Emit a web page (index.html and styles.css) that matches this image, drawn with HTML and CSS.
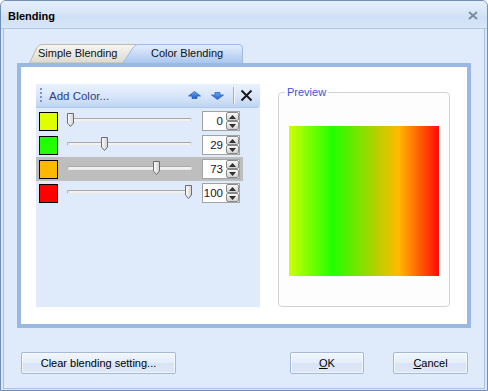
FILE: index.html
```html
<!DOCTYPE html>
<html>
<head>
<meta charset="utf-8">
<link rel="stylesheet" href="styles.css">
</head>
<body>
<div class="win">
  <div class="titlebar">
    <span class="title">Blending</span>
    <svg class="close" width="10" height="9" viewBox="0 0 10 9"><path d="M1,1 L9,8 M9,1 L1,8" stroke="#7b8ba6" stroke-width="2"/></svg>
  </div>
  <div class="client">
    <div class="tabs">
      <div class="tab tab-off">
        <svg class="tabshape" width="109" height="19" viewBox="0 0 109 19">
          <defs><linearGradient id="g1" x1="0" y1="0" x2="0" y2="1"><stop offset="0" stop-color="#f7f6f2"/><stop offset="1" stop-color="#dcd9cf"/></linearGradient></defs>
          <path d="M1.5,19 L9,3.5 Q10.5,0.5 14,0.5 L108,0.5 L108,19 Z" fill="url(#g1)" stroke="#bdbab0"/>
        </svg>
        <span class="tablabel">Simple Blending</span>
      </div>
      <div class="tab tab-on">
        <svg class="tabshape" width="121" height="19" viewBox="0 0 121 19">
          <defs><linearGradient id="g2" x1="0" y1="0" x2="0" y2="1"><stop offset="0" stop-color="#e5effd"/><stop offset="1" stop-color="#a8c5ee"/></linearGradient></defs>
          <path d="M0.5,19.5 L11.5,3 Q13.5,0.5 17,0.5 L117,0.5 Q120.5,0.5 120.5,4 L120.5,19.5" fill="url(#g2)" stroke="#9cbbe6"/>
        </svg>
        <span class="tablabel">Color Blending</span>
      </div>
    </div>
    <div class="page">
      <div class="listpanel">
        <div class="toolbar">
          <span class="grip"></span>
          <span class="addcolor">Add Color...</span>
          <svg class="tbicon up" width="13" height="8" viewBox="0 0 13 8">
            <defs><linearGradient id="ga" x1="0" y1="0" x2="0" y2="1"><stop offset="0" stop-color="#6aa8f0"/><stop offset="1" stop-color="#1c5fcf"/></linearGradient></defs>
            <path d="M6.5,0.5 L12.5,5 L9,5 L9,7.5 L4,7.5 L4,5 L0.5,5 Z" fill="url(#ga)" stroke="#2a62c0" stroke-width="0.8"/>
          </svg>
          <svg class="tbicon down" width="13" height="8" viewBox="0 0 13 8">
            <defs><linearGradient id="gb" x1="0" y1="0" x2="0" y2="1"><stop offset="0" stop-color="#6aa8f0"/><stop offset="1" stop-color="#1c5fcf"/></linearGradient></defs>
            <path d="M4,0.5 L9,0.5 L9,3 L12.5,3 L6.5,7.5 L0.5,3 L4,3 Z" fill="url(#gb)" stroke="#2a62c0" stroke-width="0.8"/>
          </svg>
          <span class="tbsep"></span>
          <svg class="tbicon del" width="13" height="13" viewBox="0 0 13 13"><path d="M1.5,1.5 L11.5,11.5 M11.5,1.5 L1.5,11.5" stroke="#1a1a1a" stroke-width="2"/></svg>
        </div>

        <div class="row">
          <span class="swatch" style="background:#ddff00"></span>
          <div class="slider"><div class="track"></div><svg class="thumb" style="left:0px" width="7" height="14" viewBox="0 0 7 14"><defs><linearGradient id="gt" x1="0" y1="0" x2="1" y2="0"><stop offset="0" stop-color="#ffffff"/><stop offset="1" stop-color="#d0d0d0"/></linearGradient></defs><path d="M0.5,0.5 H6.5 V10 L3.5,13.5 L0.5,10 Z" fill="url(#gt)" stroke="#6e6e6e"/></svg></div>
          <div class="spin"><span class="num">0</span><span class="spinbtns"><span class="sb"><svg width="7" height="4" viewBox="0 0 7 4"><path d="M0,4 L3.5,0 L7,4 Z" fill="#303030"/></svg></span><span class="sb"><svg width="7" height="4" viewBox="0 0 7 4"><path d="M0,0 L3.5,4 L7,0 Z" fill="#303030"/></svg></span></span></div>
        </div>
        <div class="row">
          <span class="swatch" style="background:#22ff00"></span>
          <div class="slider"><div class="track"></div><svg class="thumb" style="left:34px" width="7" height="14" viewBox="0 0 7 14"><path d="M0.5,0.5 H6.5 V10 L3.5,13.5 L0.5,10 Z" fill="url(#gt)" stroke="#6e6e6e"/></svg></div>
          <div class="spin"><span class="num">29</span><span class="spinbtns"><span class="sb"><svg width="7" height="4" viewBox="0 0 7 4"><path d="M0,4 L3.5,0 L7,4 Z" fill="#303030"/></svg></span><span class="sb"><svg width="7" height="4" viewBox="0 0 7 4"><path d="M0,0 L3.5,4 L7,0 Z" fill="#303030"/></svg></span></span></div>
        </div>
        <div class="row selected">
          <span class="swatch" style="background:#ffb900"></span>
          <div class="slider"><div class="track"></div><svg class="thumb" style="left:86px" width="7" height="14" viewBox="0 0 7 14"><path d="M0.5,0.5 H6.5 V10 L3.5,13.5 L0.5,10 Z" fill="url(#gt)" stroke="#6e6e6e"/></svg></div>
          <div class="spin"><span class="num">73</span><span class="spinbtns"><span class="sb"><svg width="7" height="4" viewBox="0 0 7 4"><path d="M0,4 L3.5,0 L7,4 Z" fill="#303030"/></svg></span><span class="sb"><svg width="7" height="4" viewBox="0 0 7 4"><path d="M0,0 L3.5,4 L7,0 Z" fill="#303030"/></svg></span></span></div>
        </div>
        <div class="row">
          <span class="swatch" style="background:#ff0000"></span>
          <div class="slider"><div class="track"></div><svg class="thumb" style="left:118px" width="7" height="14" viewBox="0 0 7 14"><path d="M0.5,0.5 H6.5 V10 L3.5,13.5 L0.5,10 Z" fill="url(#gt)" stroke="#6e6e6e"/></svg></div>
          <div class="spin"><span class="num">100</span><span class="spinbtns"><span class="sb"><svg width="7" height="4" viewBox="0 0 7 4"><path d="M0,4 L3.5,0 L7,4 Z" fill="#303030"/></svg></span><span class="sb"><svg width="7" height="4" viewBox="0 0 7 4"><path d="M0,0 L3.5,4 L7,0 Z" fill="#303030"/></svg></span></span></div>
        </div>
      </div>
      <fieldset class="preview">
        <legend>Preview</legend>
        <div class="grad"></div>
      </fieldset>
    </div>
    <div class="buttons">
      <button class="btn btn-clear">Clear blending setting...</button>
      <button class="btn btn-ok"><u>O</u>K</button>
      <button class="btn btn-cancel"><u>C</u>ancel</button>
    </div>
  </div>
</div>
</body>
</html>
```

FILE: styles.css
```css
* { box-sizing: border-box; }
html, body { margin: 0; padding: 0; background: #ffffff; }
body {
  font-family: "Liberation Sans", Arial, sans-serif;
  font-size: 11px;
  color: #000;
}
.win {
  width: 488px;
  height: 391px;
  border: 1px solid #6f8db6;
  border-radius: 6px 6px 0 0;
  background: #dce8f9;
  display: flex;
  flex-direction: column;
  overflow: hidden;
}
.titlebar {
  height: 28px;
  flex: none;
  border-bottom: 1px solid #aec6e8;
  background: linear-gradient(#e4eefc 0%, #dae7f9 40%, #cfdff5 60%, #d9e6f8 100%);
  display: flex;
  align-items: center;
  padding: 2px 9px 0 7px;
}
.title { font-weight: bold; font-size: 11px; color: #000; }
.close { margin-left: auto; margin-top: -1px; }

.client {
  flex: 1;
  margin: 0 2px 1px 2px;
  border: 1px solid #a9c2e4;
  border-top: 0;
  background: #dfeafb;
  padding: 15px 12px 0 13px;
  display: flex;
  flex-direction: column;
}
.tabs {
  display: flex;
  height: 19px;
  margin-left: 11px;
}
.tab {
  position: relative;
  height: 19px;
  line-height: 19px;
}
.tabshape { position: absolute; left: 0; top: 0; }
.tablabel { position: relative; color: #111; }
.tab-off { width: 109px; margin-right: -15px; padding-left: 10px; }
.tab-on { width: 121px; padding-left: 29px; }

.page {
  width: 454px;
  height: 265px;
  border: 4px solid #99b8e4;
  background: #ffffff;
  padding: 17px 17px 17px 15px;
  display: flex;
  gap: 18px;
}
.listpanel {
  width: 224px;
  height: 223px;
  background: #dfeafb;
}
.toolbar {
  height: 24px;
  margin-bottom: 1px;
  border-radius: 0 4px 4px 0;
  background: linear-gradient(#e9f1fd 0%, #dbe8fb 45%, #cadcf5 80%, #bdd3f2 100%);
  border-bottom: 1px solid #b0c8ea;
  display: flex;
  align-items: center;
  padding-left: 4px;
}
.grip {
  width: 2px;
  height: 16px;
  background: repeating-linear-gradient(#7394cc 0 2px, transparent 2px 4px);
}
.addcolor {
  margin-left: 7px;
  color: #2b3e86;
  font-size: 11.5px;
}
.tbicon { flex: none; }
.up { margin-left: 79px; margin-top: -2px; }
.down { margin-left: 10px; margin-top: 1px; }
.tbsep {
  width: 2px;
  height: 17px;
  margin-left: 9px;
  border-left: 1px solid #94b1dc;
  border-right: 1px solid #f4f8fe;
}
.del { margin-left: 5px; }

.row {
  width: 207px;
  height: 24px;
  display: flex;
  align-items: center;
  padding: 0 3px 0 3px;
}
.row.selected { background: #bebebe; }
.swatch {
  width: 19px;
  height: 19px;
  border: 1px solid #000;
  flex: none;
}
.slider {
  position: relative;
  width: 125px;
  height: 24px;
  margin-left: 9px;
  flex: none;
}
.track {
  margin-top: 9px;
  height: 4px;
  border-radius: 2px;
  border: 1px solid #a8a8a8;
  border-bottom-color: #e8e8e8;
  border-right-color: #d8d8d8;
  background: #f2f2f2;
}
.thumb { position: absolute; top: 4px; }
.spin {
  margin-left: 10px;
  width: 38px;
  height: 20px;
  border: 1px solid #a3a3a3;
  background: #fff;
  display: flex;
  align-items: center;
  flex: none;
}
.num {
  width: 20px;
  text-align: right;
  font-size: 11.5px;
  color: #1a1030;
}
.spinbtns {
  margin-left: 3px;
  display: flex;
  flex-direction: column;
  gap: 0;
}
.sb {
  width: 13px;
  height: 9px;
  border: 1px solid #8a8a8a;
  border-radius: 2px;
  background: linear-gradient(#f8f8f8, #d2d2d2);
  display: flex;
  align-items: center;
  justify-content: center;
}

.preview {
  margin: 2px 0 0 0;
  padding: 0;
  width: 172px;
  height: 221px;
  border: 1px solid #d2d2d2;
  border-radius: 4px;
  background: #fdfdfd;
}
.preview legend {
  margin-left: 6px;
  padding: 0 2px;
  color: #3a55d0;
  font-size: 11px;
  line-height: 13px;
}
.grad {
  margin: 27px 0 0 10px;
  width: 150px;
  height: 150px;
  background: linear-gradient(to right, #ccff00 0%, #22ff00 29%, #ffb900 73%, #ff0a0a 100%);
}

.buttons {
  margin-top: 24px;
  display: flex;
  padding: 0 4px 0 4px;
}
.btn {
  height: 22px;
  border: 1px solid #a3b9da;
  border-radius: 2px;
  background: linear-gradient(#f1f6fd 0%, #e4edf9 50%, #d8e4f6 51%, #dde8f7 100%);
  box-shadow: inset 0 0 0 1px rgba(255,255,255,0.6);
  font-family: "Liberation Sans", Arial, sans-serif;
  font-size: 11px;
  color: #000;
  padding: 0;
}
.btn-clear { width: 155px; }
.btn-ok { width: 74px; margin-left: auto; }
.btn-cancel { width: 75px; margin-left: 29px; }
```
